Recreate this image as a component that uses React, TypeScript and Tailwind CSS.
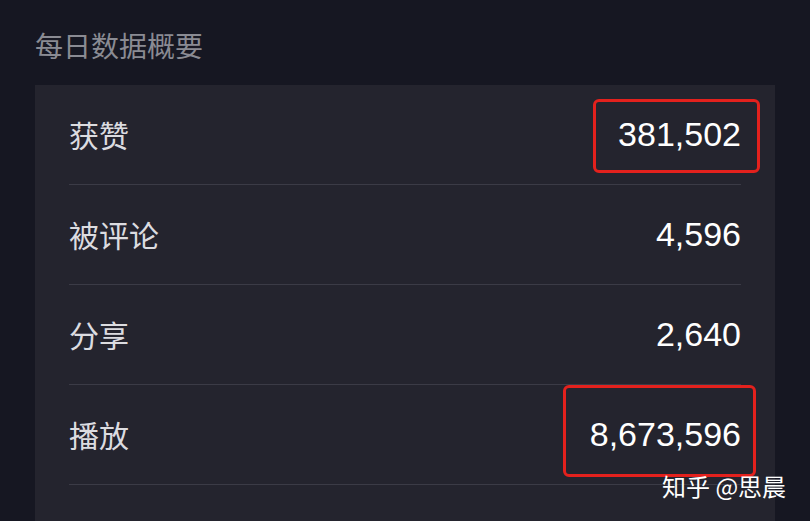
const rows = [
  { label: '获赞', value: '381,502' },
  { label: '被评论', value: '4,596' },
  { label: '分享', value: '2,640' },
  { label: '播放', value: '8,673,596' },
  { label: '', value: '' },
];

export default function App() {
  return (
    <div
      className="relative w-[810px] h-[521px] overflow-hidden bg-[#161722]"
      style={{ fontFamily: '"Noto Sans CJK SC", "Liberation Sans", sans-serif' }}
    >
      <div className="pl-[35px] pt-[26px] h-[85px] text-[28px] leading-[38px] text-[#8a8b93]">
        每日数据概要
      </div>

      <div className="ml-[35px] w-[740px] bg-[#24242e] px-[34px]">
        {rows.map((row, i) => (
          <div
            key={i}
            className={`flex items-center justify-between h-[100px] ${
              i < rows.length - 1 ? 'border-b border-[#3b3b46]' : ''
            }`}
          >
            <span className="text-[30px] text-[#dcdce0]">{row.label}</span>
            <span
              className="text-[34px] text-white"
              style={{ fontFamily: '"Liberation Sans", sans-serif' }}
            >
              {row.value}
            </span>
          </div>
        ))}
      </div>

      {/* highlight boxes */}
      <div className="absolute left-[593px] top-[99px] w-[167px] h-[74px] rounded-[6px] border-[3px] border-[#e3211d]" />
      <div className="absolute left-[563px] top-[385px] w-[193px] h-[92px] rounded-[6px] border-[3px] border-[#e3211d]" />

      {/* watermark */}
      <div className="absolute left-[662px] top-[469px] text-[24px] leading-[34px] text-white">
        知乎 @思晨
      </div>
    </div>
  );
}
